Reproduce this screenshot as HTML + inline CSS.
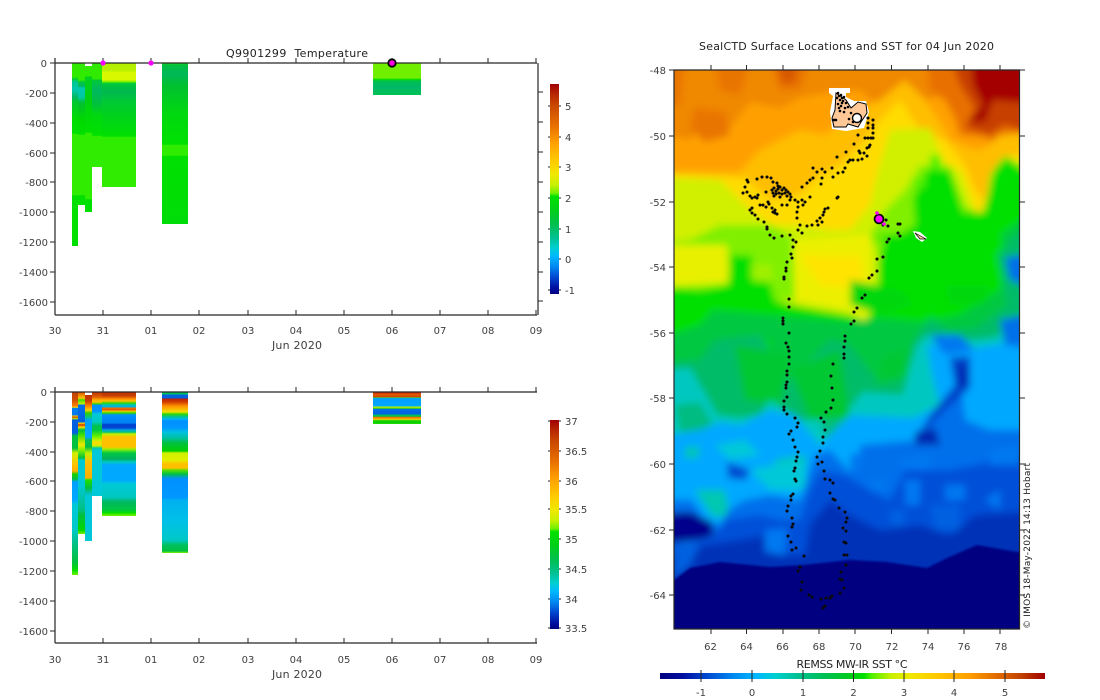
<!DOCTYPE html>
<html>
<head>
<meta charset="utf-8">
<style>
html,body{margin:0;padding:0;background:#fff;width:1100px;height:700px;overflow:hidden}
svg{display:block}
text{font-family:"DejaVu Sans","Liberation Sans",sans-serif;font-size:10px;fill:#404040}
.ti{font-size:11px;fill:#222}
.s{stroke:#262626;stroke-width:1.2;fill:none}
.t{stroke:#262626;stroke-width:1;fill:none}
</style>
</head>
<body>
<svg width="1100" height="700" viewBox="0 0 1100 700" xmlns="http://www.w3.org/2000/svg">
<defs>
<clipPath id="mc"><rect x="674" y="70" width="345" height="559"/></clipPath>
<filter id="bl" filterUnits="userSpaceOnUse" x="640" y="40" width="410" height="640"><feGaussianBlur stdDeviation="3.6"/></filter>
<filter id="bl1" filterUnits="userSpaceOnUse" x="640" y="40" width="410" height="640"><feGaussianBlur stdDeviation="1"/></filter>

<linearGradient id="cb1" x1="0" y1="0" x2="0" y2="1">
<stop offset="0" stop-color="#a00000"/><stop offset=".05" stop-color="#b82800"/><stop offset=".1" stop-color="#c84800"/><stop offset=".2" stop-color="#e87000"/><stop offset=".28" stop-color="#ffa000"/><stop offset=".36" stop-color="#ffc800"/><stop offset=".43" stop-color="#f0e800"/><stop offset=".48" stop-color="#c8f000"/><stop offset=".52" stop-color="#70f000"/><stop offset=".535" stop-color="#00e000"/><stop offset=".6" stop-color="#00d018"/><stop offset=".66" stop-color="#00c048"/><stop offset=".73" stop-color="#00c090"/><stop offset=".78" stop-color="#00cfd0"/><stop offset=".82" stop-color="#00b8ff"/><stop offset=".87" stop-color="#0088f0"/><stop offset=".92" stop-color="#0048d0"/><stop offset=".97" stop-color="#0010a0"/><stop offset="1" stop-color="#000080"/>
</linearGradient>
<linearGradient id="cbh" x1="0" y1="0" x2="1" y2="0">
<stop offset="0" stop-color="#000080"/><stop offset=".06" stop-color="#0010a0"/><stop offset=".12" stop-color="#0048d0"/><stop offset=".19" stop-color="#0088f0"/><stop offset=".25" stop-color="#00b8ff"/><stop offset=".3" stop-color="#00cfd0"/><stop offset=".36" stop-color="#00c090"/><stop offset=".44" stop-color="#00c048"/><stop offset=".5" stop-color="#00d018"/><stop offset=".53" stop-color="#00e000"/><stop offset=".55" stop-color="#50f000"/><stop offset=".6" stop-color="#c8f000"/><stop offset=".65" stop-color="#f0e800"/><stop offset=".72" stop-color="#ffc800"/><stop offset=".8" stop-color="#ffa000"/><stop offset=".88" stop-color="#e06800"/><stop offset=".94" stop-color="#c04000"/><stop offset="1" stop-color="#a00000"/>
</linearGradient>

<!-- offsets are y/1000 in user space -->
<linearGradient id="t1" gradientUnits="userSpaceOnUse" x1="0" y1="0" x2="0" y2="1000"><stop offset=".063" stop-color="#30ea00"/><stop offset=".077" stop-color="#30ea00"/><stop offset=".079" stop-color="#00d030"/><stop offset=".082" stop-color="#00c890"/><stop offset=".09" stop-color="#00c8b0"/><stop offset=".097" stop-color="#00b860"/><stop offset=".102" stop-color="#00c830"/><stop offset=".12" stop-color="#00dc00"/><stop offset=".1335" stop-color="#00e000"/><stop offset=".134" stop-color="#30ec00"/><stop offset=".195" stop-color="#30ec00"/><stop offset=".1955" stop-color="#00e000"/><stop offset=".246" stop-color="#00e000"/></linearGradient>
<linearGradient id="t2" gradientUnits="userSpaceOnUse" x1="0" y1="0" x2="0" y2="1000"><stop offset=".063" stop-color="#30ea00"/><stop offset=".08" stop-color="#30ea00"/><stop offset=".082" stop-color="#00c840"/><stop offset=".086" stop-color="#00b860"/><stop offset=".088" stop-color="#00c8b0"/><stop offset=".097" stop-color="#00c8a0"/><stop offset=".103" stop-color="#00c030"/><stop offset=".12" stop-color="#00d800"/><stop offset=".1345" stop-color="#00e000"/><stop offset=".135" stop-color="#30ec00"/><stop offset=".195" stop-color="#30ec00"/><stop offset=".1955" stop-color="#00e000"/><stop offset=".205" stop-color="#00e000"/></linearGradient>
<linearGradient id="t3" gradientUnits="userSpaceOnUse" x1="0" y1="0" x2="0" y2="1000"><stop offset=".066" stop-color="#30ea00"/><stop offset=".076" stop-color="#30ea00"/><stop offset=".077" stop-color="#00d020"/><stop offset=".1" stop-color="#00d010"/><stop offset=".1325" stop-color="#00e000"/><stop offset=".133" stop-color="#30ec00"/><stop offset=".199" stop-color="#30ec00"/><stop offset=".1995" stop-color="#00e000"/><stop offset=".212" stop-color="#00e000"/></linearGradient>
<linearGradient id="t4" gradientUnits="userSpaceOnUse" x1="0" y1="0" x2="0" y2="1000"><stop offset=".063" stop-color="#30ea00"/><stop offset=".079" stop-color="#30ea00"/><stop offset=".08" stop-color="#00c838"/><stop offset=".09" stop-color="#00b860"/><stop offset=".103" stop-color="#00c040"/><stop offset=".115" stop-color="#00d810"/><stop offset=".1355" stop-color="#00e000"/><stop offset=".136" stop-color="#30ec00"/><stop offset=".167" stop-color="#30ec00"/></linearGradient>
<linearGradient id="t5" gradientUnits="userSpaceOnUse" x1="0" y1="0" x2="0" y2="1000"><stop offset=".063" stop-color="#b0f000"/><stop offset=".071" stop-color="#b8f000"/><stop offset=".072" stop-color="#d8f800"/><stop offset=".08" stop-color="#d8f800"/><stop offset=".082" stop-color="#60f000"/><stop offset=".0835" stop-color="#00c838"/><stop offset=".092" stop-color="#00b850"/><stop offset=".1" stop-color="#00c838"/><stop offset=".113" stop-color="#00d020"/><stop offset=".1365" stop-color="#00e000"/><stop offset=".137" stop-color="#30ec00"/><stop offset=".187" stop-color="#30ec00"/></linearGradient>
<linearGradient id="t6" gradientUnits="userSpaceOnUse" x1="0" y1="0" x2="0" y2="1000"><stop offset=".063" stop-color="#20e800"/><stop offset=".065" stop-color="#00c040"/><stop offset=".074" stop-color="#00b858"/><stop offset=".085" stop-color="#00c030"/><stop offset=".113" stop-color="#00d810"/><stop offset=".1445" stop-color="#00e000"/><stop offset=".145" stop-color="#30ec00"/><stop offset=".1555" stop-color="#30ec00"/><stop offset=".156" stop-color="#00e000"/><stop offset=".224" stop-color="#00dc08"/></linearGradient>
<linearGradient id="t7" gradientUnits="userSpaceOnUse" x1="0" y1="0" x2="0" y2="1000"><stop offset=".063" stop-color="#70f000"/><stop offset=".078" stop-color="#70f000"/><stop offset=".0795" stop-color="#00e000"/><stop offset=".081" stop-color="#00c050"/><stop offset=".087" stop-color="#00b868"/><stop offset=".095" stop-color="#00c050"/></linearGradient>

<linearGradient id="s1" gradientUnits="userSpaceOnUse" x1="0" y1="0" x2="0" y2="1000"><stop offset=".392" stop-color="#c04000"/><stop offset=".4" stop-color="#d05000"/><stop offset=".406" stop-color="#ff8000"/><stop offset=".4075" stop-color="#ffe000"/><stop offset=".408" stop-color="#0080f0"/><stop offset=".415" stop-color="#0078f0"/><stop offset=".416" stop-color="#ffe000"/><stop offset=".417" stop-color="#d03000"/><stop offset=".4185" stop-color="#c0f000"/><stop offset=".42" stop-color="#0060e0"/><stop offset=".433" stop-color="#0060e0"/><stop offset=".436" stop-color="#00c040"/><stop offset=".448" stop-color="#00c040"/><stop offset=".453" stop-color="#d0f000"/><stop offset=".465" stop-color="#ffc000"/><stop offset=".471" stop-color="#ffb000"/><stop offset=".474" stop-color="#20d000"/><stop offset=".479" stop-color="#00c040"/><stop offset=".482" stop-color="#00a0ff"/><stop offset=".5" stop-color="#00a8ff"/><stop offset=".505" stop-color="#00c8d8"/><stop offset=".53" stop-color="#00c8c8"/><stop offset=".545" stop-color="#00c080"/><stop offset=".562" stop-color="#00c040"/><stop offset=".57" stop-color="#00e000"/><stop offset=".575" stop-color="#70f000"/></linearGradient>
<linearGradient id="s2" gradientUnits="userSpaceOnUse" x1="0" y1="0" x2="0" y2="1000"><stop offset=".392" stop-color="#d85000"/><stop offset=".398" stop-color="#ffc000"/><stop offset=".4" stop-color="#40e000"/><stop offset=".404" stop-color="#c8f000"/><stop offset=".405" stop-color="#0070e8"/><stop offset=".422" stop-color="#0060e0"/><stop offset=".423" stop-color="#f8e000"/><stop offset=".425" stop-color="#d03000"/><stop offset=".427" stop-color="#ffe000"/><stop offset=".43" stop-color="#00c040"/><stop offset=".435" stop-color="#40e000"/><stop offset=".445" stop-color="#f0e800"/><stop offset=".45" stop-color="#80f000"/><stop offset=".458" stop-color="#00c040"/><stop offset=".46" stop-color="#00c8d0"/><stop offset=".485" stop-color="#00c8d8"/><stop offset=".51" stop-color="#00c080"/><stop offset=".515" stop-color="#00c040"/><stop offset=".53" stop-color="#00d800"/><stop offset=".534" stop-color="#70f000"/></linearGradient>
<linearGradient id="s3" gradientUnits="userSpaceOnUse" x1="0" y1="0" x2="0" y2="1000"><stop offset=".395" stop-color="#c03000"/><stop offset=".401" stop-color="#c84000"/><stop offset=".406" stop-color="#ff8000"/><stop offset=".41" stop-color="#ffd000"/><stop offset=".413" stop-color="#30d000"/><stop offset=".418" stop-color="#00c0a0"/><stop offset=".42" stop-color="#00a0ff"/><stop offset=".437" stop-color="#00a8ff"/><stop offset=".44" stop-color="#00c060"/><stop offset=".447" stop-color="#00c040"/><stop offset=".453" stop-color="#c0f000"/><stop offset=".462" stop-color="#ffc000"/><stop offset=".478" stop-color="#ffb000"/><stop offset=".48" stop-color="#20e000"/><stop offset=".488" stop-color="#00c040"/><stop offset=".492" stop-color="#00c0a0"/><stop offset=".496" stop-color="#00c8d8"/><stop offset=".541" stop-color="#00c8d8"/></linearGradient>
<linearGradient id="s4" gradientUnits="userSpaceOnUse" x1="0" y1="0" x2="0" y2="1000"><stop offset=".392" stop-color="#c03000"/><stop offset=".397" stop-color="#e06000"/><stop offset=".4" stop-color="#ffb000"/><stop offset=".402" stop-color="#ffc000"/><stop offset=".404" stop-color="#30d800"/><stop offset=".405" stop-color="#0090ff"/><stop offset=".411" stop-color="#0090ff"/><stop offset=".414" stop-color="#00c8d8"/><stop offset=".422" stop-color="#00c8c0"/><stop offset=".426" stop-color="#00c050"/><stop offset=".43" stop-color="#00c840"/><stop offset=".436" stop-color="#60f000"/><stop offset=".44" stop-color="#c0f000"/><stop offset=".443" stop-color="#ffd800"/><stop offset=".446" stop-color="#c0f000"/><stop offset=".448" stop-color="#00c8a0"/><stop offset=".45" stop-color="#00c8d8"/><stop offset=".496" stop-color="#00c8d8"/></linearGradient>
<linearGradient id="s5" gradientUnits="userSpaceOnUse" x1="0" y1="0" x2="0" y2="1000"><stop offset=".392" stop-color="#c03000"/><stop offset=".396" stop-color="#c84000"/><stop offset=".399" stop-color="#ff9000"/><stop offset=".401" stop-color="#ffc000"/><stop offset=".403" stop-color="#30d800"/><stop offset=".405" stop-color="#00c0c0"/><stop offset=".407" stop-color="#00b0e0"/><stop offset=".408" stop-color="#f07000"/><stop offset=".41" stop-color="#e05000"/><stop offset=".411" stop-color="#ffd000"/><stop offset=".413" stop-color="#30d800"/><stop offset=".415" stop-color="#0090ff"/><stop offset=".423" stop-color="#0080f0"/><stop offset=".4245" stop-color="#0040d0"/><stop offset=".428" stop-color="#0048d0"/><stop offset=".43" stop-color="#00a8e0"/><stop offset=".432" stop-color="#00c080"/><stop offset=".434" stop-color="#c0f000"/><stop offset=".437" stop-color="#ffc000"/><stop offset=".447" stop-color="#ffc000"/><stop offset=".449" stop-color="#a0f000"/><stop offset=".453" stop-color="#00c840"/><stop offset=".459" stop-color="#00b060"/><stop offset=".462" stop-color="#00c8c0"/><stop offset=".465" stop-color="#00a8ff"/><stop offset=".48" stop-color="#00a8ff"/><stop offset=".484" stop-color="#00c8d8"/><stop offset=".497" stop-color="#00c8c0"/><stop offset=".502" stop-color="#00b860"/><stop offset=".51" stop-color="#00c840"/><stop offset=".5125" stop-color="#00e000"/><stop offset=".516" stop-color="#80f000"/></linearGradient>
<linearGradient id="s6" gradientUnits="userSpaceOnUse" x1="0" y1="0" x2="0" y2="1000"><stop offset=".392" stop-color="#00c060"/><stop offset=".394" stop-color="#00c060"/><stop offset=".395" stop-color="#0060e0"/><stop offset=".398" stop-color="#0060e0"/><stop offset=".399" stop-color="#c02000"/><stop offset=".402" stop-color="#d04000"/><stop offset=".406" stop-color="#ff9000"/><stop offset=".412" stop-color="#f0e000"/><stop offset=".414" stop-color="#30d800"/><stop offset=".417" stop-color="#00c0a0"/><stop offset=".419" stop-color="#00b8f0"/><stop offset=".421" stop-color="#0090ff"/><stop offset=".428" stop-color="#0098ff"/><stop offset=".432" stop-color="#00c0e0"/><stop offset=".438" stop-color="#00c0a0"/><stop offset=".443" stop-color="#00c040"/><stop offset=".451" stop-color="#00d000"/><stop offset=".453" stop-color="#d0f000"/><stop offset=".46" stop-color="#e0f000"/><stop offset=".464" stop-color="#ffc000"/><stop offset=".468" stop-color="#ffc000"/><stop offset=".47" stop-color="#60e000"/><stop offset=".474" stop-color="#00c040"/><stop offset=".477" stop-color="#00a0c0"/><stop offset=".479" stop-color="#0090ff"/><stop offset=".498" stop-color="#0098ff"/><stop offset=".5" stop-color="#00b0f0"/><stop offset=".52" stop-color="#00c0e8"/><stop offset=".54" stop-color="#00c8c8"/><stop offset=".545" stop-color="#00c060"/><stop offset=".551" stop-color="#00c040"/><stop offset=".553" stop-color="#80f000"/></linearGradient>
<linearGradient id="s7" gradientUnits="userSpaceOnUse" x1="0" y1="0" x2="0" y2="1000"><stop offset=".392" stop-color="#c82000"/><stop offset=".3935" stop-color="#d84000"/><stop offset=".395" stop-color="#e06000"/><stop offset=".397" stop-color="#d03800"/><stop offset=".3975" stop-color="#60e000"/><stop offset=".398" stop-color="#00b0d0"/><stop offset=".399" stop-color="#00a0ff"/><stop offset=".406" stop-color="#00a8ff"/><stop offset=".407" stop-color="#d0f000"/><stop offset=".4085" stop-color="#30e000"/><stop offset=".409" stop-color="#0070e8"/><stop offset=".414" stop-color="#0060e0"/><stop offset=".415" stop-color="#00c060"/><stop offset=".4165" stop-color="#00c040"/><stop offset=".417" stop-color="#f07000"/><stop offset=".4185" stop-color="#ff9000"/><stop offset=".4195" stop-color="#f0e000"/><stop offset=".4205" stop-color="#20d000"/><stop offset=".4235" stop-color="#00d000"/><stop offset=".424" stop-color="#70f000"/></linearGradient>
</defs>

<rect width="1100" height="700" fill="#fff"/>

<!-- TOP PLOT -->
<rect x="72" y="63" width="6" height="183" fill="url(#t1)"/>
<rect x="78" y="63" width="7" height="142" fill="url(#t2)"/>
<rect x="85" y="66" width="7" height="146" fill="url(#t3)"/>
<rect x="92" y="63" width="10" height="104" fill="url(#t4)"/>
<rect x="102" y="63" width="34" height="124" fill="url(#t5)"/>
<rect x="162" y="63" width="26" height="161" fill="url(#t6)"/>
<rect x="373" y="63" width="48" height="32" fill="url(#t7)"/>

<path class="s" d="M55 63H537M55 58V315M55 315H537M538 63V315"/>
<path class="t" d="M103 58V63M151 58V63M199 58V63M248 58V63M296 58V63M344 58V63M392 58V63M440 58V63M488 58V63M536 58V63M50 63H55M50 93H55M50 123H55M50 153H55M50 182H55M50 212H55M50 242H55M50 272H55M50 302H55M103 310V315M151 310V315M199 310V315M248 310V315M296 310V315M344 310V315M392 310V315M440 310V315M488 310V315M536 310V315M538 92H543M538 122H543M538 152H543M538 182H543M538 212H543M538 242H543M538 272H543M538 301H543"/>
<g text-anchor="end">
<text x="47" y="67">0</text><text x="48" y="97">-200</text><text x="48" y="127">-400</text><text x="48" y="157">-600</text><text x="48" y="186">-800</text><text x="48" y="216">-1000</text><text x="48" y="246">-1200</text><text x="48" y="276">-1400</text><text x="48" y="306">-1600</text>
</g>
<g text-anchor="middle">
<text x="55" y="334">30</text><text x="103" y="334">31</text><text x="151" y="334">01</text><text x="199" y="334">02</text><text x="248" y="334">03</text><text x="296" y="334">04</text><text x="344" y="334">05</text><text x="392" y="334">06</text><text x="440" y="334">07</text><text x="488" y="334">08</text><text x="536" y="334">09</text>
<text x="297" y="349" class="ti" style="fill:#404040" textLength="50">Jun 2020</text>
<text x="297" y="57" class="ti" textLength="142" xml:space="preserve">Q9901299  Temperature</text>
</g>
<circle cx="103" cy="63" r="2.6" fill="#ff00ff"/><circle cx="151" cy="63" r="2.6" fill="#ff00ff"/>
<circle cx="392" cy="63" r="4.6" fill="#000"/><circle cx="392" cy="63" r="2.8" fill="#ff00e0"/>

<!-- top colorbar -->
<rect x="550" y="84" width="9" height="210" fill="url(#cb1)"/>
<path class="t" d="M548 106H550M559 106H561M548 137H550M559 137H561M548 167H550M559 167H561M548 198H550M559 198H561M548 229H550M559 229H561M548 259H550M559 259H561M548 290H550M559 290H561"/>
<text x="565" y="110">5</text><text x="565" y="141">4</text><text x="565" y="171">3</text><text x="565" y="202">2</text><text x="565" y="233">1</text><text x="565" y="263">0</text><text x="565" y="294">-1</text>

<!-- BOTTOM PLOT -->
<rect x="72" y="392" width="6" height="183" fill="url(#s1)"/>
<rect x="78" y="392" width="7" height="142" fill="url(#s2)"/>
<rect x="85" y="395" width="7" height="146" fill="url(#s3)"/>
<rect x="92" y="392" width="10" height="104" fill="url(#s4)"/>
<rect x="102" y="392" width="34" height="124" fill="url(#s5)"/>
<rect x="162" y="392" width="26" height="161" fill="url(#s6)"/>
<rect x="373" y="392" width="48" height="32" fill="url(#s7)"/>

<path class="s" d="M55 392H537M55 387V643M55 643H537"/>
<path class="t" d="M103 387V392M151 387V392M199 387V392M248 387V392M296 387V392M344 387V392M392 387V392M440 387V392M488 387V392M536 387V392M50 392H55M50 422H55M50 452H55M50 481H55M50 511H55M50 541H55M50 571H55M50 601H55M50 631H55M103 638V643M151 638V643M199 638V643M248 638V643M296 638V643M344 638V643M392 638V643M440 638V643M488 638V643M536 638V643"/>
<g text-anchor="end">
<text x="47" y="396">0</text><text x="48" y="426">-200</text><text x="48" y="456">-400</text><text x="48" y="485">-600</text><text x="48" y="515">-800</text><text x="48" y="545">-1000</text><text x="48" y="575">-1200</text><text x="48" y="605">-1400</text><text x="48" y="635">-1600</text>
</g>
<g text-anchor="middle">
<text x="55" y="663">30</text><text x="103" y="663">31</text><text x="151" y="663">01</text><text x="199" y="663">02</text><text x="248" y="663">03</text><text x="296" y="663">04</text><text x="344" y="663">05</text><text x="392" y="663">06</text><text x="440" y="663">07</text><text x="488" y="663">08</text><text x="536" y="663">09</text>
<text x="297" y="678" class="ti" style="fill:#404040" textLength="50">Jun 2020</text>
</g>
<rect x="550" y="420" width="9" height="209" fill="url(#cb1)"/>
<path class="t" d="M548 421H550M559 421H561M548 451H550M559 451H561M548 481H550M559 481H561M548 509H550M559 509H561M548 539H550M559 539H561M548 569H550M559 569H561M548 599H550M559 599H561M548 628H550M559 628H561"/>
<text x="565" y="425">37</text><text x="565" y="455">36.5</text><text x="565" y="485">36</text><text x="565" y="513">35.5</text><text x="565" y="543">35</text><text x="565" y="573">34.5</text><text x="565" y="603">34</text><text x="565" y="632">33.5</text>

<!-- MAP -->
<g clip-path="url(#mc)">
<g filter="url(#bl)">
<rect x="640" y="40" width="410" height="640" fill="#ffa000"/>
<path fill="#f08800" d="M640 40H960L945 90L930 100L905 92L880 108L860 90L830 92L800 98L780 108L750 102L730 128L700 128L690 140L640 130Z"/>
<path fill="#e87400" d="M695 108L725 112L730 135L705 142L690 128ZM770 60L810 60L800 90L780 90ZM715 60L750 60L740 95L720 90ZM640 60H685L680 105L640 110Z"/>
<path fill="#d85800" d="M776 60L798 60L795 82L782 84Z"/>
<path fill="#e87000" d="M925 40H1050V152L1000 150L985 137L960 135L955 118L945 100L930 90Z"/>
<path fill="#c84000" d="M945 40H1050V140L1005 125L990 135L965 128L975 108L960 85Z"/>
<path fill="#a50000" d="M968 40H1050V105L993 100L985 122L968 122L983 105L973 85Z"/>
<path fill="#ffbe00" d="M640 172L740 172L760 150L780 140L800 130L825 135L850 115L880 100L905 80L925 100L945 130L950 140L975 150L985 148L1000 135L1050 130V700H640Z"/>
<path fill="#ffdc00" d="M640 172L745 178L770 200L800 195L820 175L840 165L865 140L880 120L900 100L920 130L945 140L965 165L975 190L985 200L1000 185L1010 155L1050 150V700H640Z"/>
<path fill="#d0f000" d="M640 176L720 180L745 205L770 225L800 225L830 230L850 230L870 205L878 170L890 130L930 128L945 165L960 170L975 210L985 232L990 195L1000 165L1050 155V700H640Z"/>
<path fill="#80f000" d="M640 245L690 240L720 225L770 225L795 238L800 300H640ZM870 235L885 210L905 190L920 165L950 165L965 205L985 218L990 175L1005 155L1050 185V340H880L880 260Z"/>
<path fill="#e8f000" d="M640 245L727 245L730 283L640 288Z"/>
<path fill="#ecf000" d="M793 240L870 235L872 318L845 308L795 300Z"/>
<path fill="#ffe400" d="M800 255L860 255L865 290L820 285Z"/>
<path fill="#a0f000" d="M752 265L772 265L772 282L752 282Z"/>
<path fill="#00e000" d="M640 285L700 290L728 285L730 255L752 255L752 280L770 282L775 300L793 305L850 315L865 322L878 300L878 262L885 240L872 236L900 234L915 225L913 198L927 170L950 170L963 212L983 212L995 167L1007 157L1050 192V700H640Z"/>
<path fill="#50f000" d="M915 178L925 178L925 188L915 186ZM930 155L940 155L942 170L930 170Z"/>
<path fill="#00c840" d="M640 345L700 325L713 310L850 322L880 318L925 322L960 315L1000 290L1010 260L1000 235L1050 200V700H640Z"/>
<path fill="#00d810" d="M850 280L900 290L915 305L880 315L850 305ZM945 285L990 285L985 305L950 305ZM750 340L772 340L770 370L752 368Z"/>
<path fill="#00bc68" d="M640 365L700 360L715 340L760 335L790 380L830 340L850 345L880 385L907 378L913 342L930 317L950 332L977 328L1007 305L997 255L1010 240L1050 210V700H640Z"/>
<path fill="#00c830" d="M735 345L790 355L780 405L745 400ZM790 370L840 350L850 420L810 420ZM880 360L905 350L900 375L880 380Z"/>
<path fill="#00c8c0" d="M640 372L690 368L710 402L717 415L740 418L760 415L770 400L800 420L820 420L830 445L845 440L850 408L863 392L903 395L910 368L917 345L927 335L950 342L993 338L1050 310V700H640Z"/>
<path fill="#00bc80" d="M674 405L700 402L716 430L680 432ZM820 420L845 418L842 445L828 445Z"/>
<path fill="#00a8ff" d="M640 440L700 430L720 422L740 425L770 410L795 415L820 445L850 415L913 418L940 405L932 375L927 345L950 345L960 350L993 345L1050 330V700H640Z"/>
<path fill="#00c8b0" d="M685 447L700 447L698 458L685 458ZM775 460L805 455L805 482L780 482ZM695 490L725 490L730 518L712 516Z"/>
<path fill="#00c8d8" d="M715 445L745 440L760 455L730 460ZM750 470L800 460L810 490L770 490Z"/>
<path fill="#0070e8" d="M1005 258L1050 250V295L1010 280ZM1000 320L1050 310V350L1005 345Z"/>
<path fill="#0070ea" d="M640 500L692 500L705 520L720 525L728 510L745 500L770 495L800 500L808 475L815 455L830 450L850 472L860 465L860 445L920 440L935 415L962 390L965 420L990 430L1050 430V700H640Z"/>
<path fill="#0078f0" d="M930 335L960 335L975 350L945 355ZM900 460L930 455L930 470L905 470Z"/>
<path fill="#0040c8" d="M950 358L970 356L970 388L945 410L925 430L915 440L930 415L955 385Z"/>
<path fill="#0028b0" d="M915 432L935 428L940 445L915 445ZM960 363L967 368L968 385L958 385Z"/>
<path fill="#0050d8" d="M640 540L690 545L715 535L725 520L760 515L780 520L800 520L810 490L820 470L845 475L870 490L890 500L905 470L930 470L950 470L1000 460L1050 450V700H640Z"/>
<path fill="#0048d0" d="M727 462L750 470L745 480L728 478Z"/>
<path fill="#0078f0" d="M945 485L965 485L965 500L945 500ZM850 455L862 452L860 470L850 472ZM905 480L920 480L920 505L905 505ZM870 480L885 480L885 490L870 490ZM985 500L1000 490L1000 510ZM990 450L1020 445V465L990 465Z"/>
<path fill="#0030b8" d="M640 578L680 550L705 545L740 540L770 535L775 555L805 555L810 525L830 500L850 515L880 530L920 525L950 535L975 515L1050 510V700H640Z"/>
<path fill="#0078f0" d="M765 530L787 528L785 555L765 552Z"/>
<path fill="#0060e0" d="M674 545L700 545L690 565L674 578ZM930 505L960 505L960 530L935 530ZM890 510L905 510L905 525L890 525Z"/>
<path fill="#00008c" d="M640 515L690 512L712 522L714 535L700 540L640 545Z"/>
</g>
<path filter="url(#bl1)" fill="#000080" d="M640 590L674 580L690 568L720 562L770 567L803 565L850 560L887 562L927 568L947 558L977 545L1017 552L1050 552V700H640Z"/>
</g>

<!-- Kerguelen -->
<path fill="#fff" d="M829 88H850V93H846V97L854 101L866 101L869 112L864 128L846 131L832 129L830 112L833 96L829 93Z"/>
<path fill="#ffc896" stroke="#000" stroke-width="1" d="M836 93L846 100L851 108L858 102L866 104L867 113L861 122L858 127L848 124L846 127L834 127L832 118L835 110Z"/>
<circle cx="857" cy="118" r="4.5" fill="#fff" stroke="#000" stroke-width="1.4"/>
<path stroke="#000" stroke-width="2.6" stroke-linecap="round" fill="none" d="M838 93h.01M841 95h.01M844 97h.01M837 98h.01M840 100h.01M843 101h.01M846 103h.01M838 104h.01M841 106h.01M845 108h.01M848 107h.01M840 111h.01M844 112h.01M836 120h-3M851 113h.01M853 122h.01M849 119h.01M839 96h.01M842 98h.01M842 103h.01M839 108h.01"/>
<!-- Heard -->
<path fill="#fff" d="M913 231L920 232L927 238L922 242L916 238Z"/>
<path fill="#ffc896" stroke="#000" stroke-width=".7" d="M915 233L926 239L920 239Z"/>

<!-- tracks -->
<g clip-path="url(#mc)">
<path fill="none" stroke="#0a0a0a" stroke-width="3.1" stroke-linecap="round" d="M747 180h.01M748 182h.01M745 187h.01M743 193h.01M757 179h.01M762 177h.01M767 177h.01M771 178h.01M773 182h.01M777 183h.01M778 186h.01M772 190h.01M774 188h.01M776 191h.01M778 189h.01M780 187h.01M782 190h.01M784 188h.01M786 190h.01M788 192h.01M773 193h.01M776 194h.01M779 193h.01M782 194h.01M785 193h.01M787 196h.01M790 194h.01M791 197h.01M774 196h.01M780 197h.01M747 192h.01M750 196h.01M752 198h.01M758 195h.01M755 197h.01M757 198h.01M766 192h.01M782 205h.01M787 205h.01M760 205h.01M752 208h.01M750 210h.01M768 202h.01M763 205h.01M766 207h.01M772 208h.01M769 204h.01M773 212h.01M775 210h.01M777 214h.01M775 213h.01M752 213h.01M755 215h.01M758 219h.01M764 222h.01M767 227h.01M767 229h.01M770 235h.01M774 238h.01M782 236h.01M790 235h.01M793 240h.01M796 242h.01M802 233h.01M798 230h.01M800 225h.01M807 226h.01M812 225h.01M817 221h.01M818 225h.01M822 222h.01M820 218h.01M823 215h.01M825 209h.01M828 208h.01M824 212h.01M797 212h.01M797 218h.01M798 207h.01M798 202h.01M790 200h.01M795 200h.01M802 200h.01M805 202h.01M810 197h.01M803 205h.01M802 187h.01M807 183h.01M810 180h.01M813 178h.01M813 168h.01M817 172h.01M822 169h.01M825 172h.01M822 178h.01M821 184h.01M832 168h.01M833 177h.01M838 173h.01M843 172h.01M845 168h.01M848 162h.01M837 157h.01M846 152h.01M838 197h.01M837 198h.01M873 120h.01M868 118h.01M868 123h.01M873 125h.01M868 128h.01M873 128h.01M858 135h.01M873 133h.01M865 138h.01M868 138h.01M871 138h.01M873 138h.01M870 145h.01M867 148h.01M869 147h.01M854 144h.01M859 151h.01M860 153h.01M864 153h.01M867 156h.01M850 160h.01M853 160h.01M858 160h.01M862 159h.01M886 220h.01M883 225h.01M888 226h.01M898 224h.01M900 224h.01M898 233h.01M900 236h.01M889 239h.01M887 242h.01M793 247h.01M791 254h.01M792 258h.01M787 262h.01M786 268h.01M786 271h.01M784 277h.01M784 279h.01M789 299h.01M789 307h.01M783 318h.01M783 321h.01M783 324h.01M789 333h.01M786 343h.01M788 347h.01M789 351h.01M789 357h.01M789 364h.01M787 371h.01M787 375h.01M787 382h.01M786 385h.01M786 388h.01M787 397h.01M784 401h.01M784 407h.01M784 410h.01M787 414h.01M795 418h.01M798 423h.01M797 427h.01M791 431h.01M789 434h.01M793 440h.01M845 336h.01M845 341h.01M844 347h.01M844 354h.01M844 358h.01M833 364h.01M831 376h.01M832 388h.01M833 400h.01M831 408h.01M826 412h.01M821 418h.01M824 422h.01M825 430h.01M823 437h.01M823 443h.01M883 257h.01M877 259h.01M877 271h.01M872 275h.01M869 278h.01M865 295h.01M862 298h.01M857 308h.01M854 312h.01M854 321h.01M851 324h.01M795 447h.01M798 452h.01M797 457h.01M796 461h.01M795 468h.01M794 471h.01M795 479h.01M796 481h.01M793 494h.01M791 496h.01M791 500h.01M788 506h.01M787 511h.01M792 518h.01M793 524h.01M792 527h.01M788 536h.01M791 542h.01M796 548h.01M792 550h.01M804 556h.01M800 567h.01M798 571h.01M802 582h.01M801 590h.01M809 595h.01M812 597h.01M821 599h.01M826 598h.01M830 598h.01M832 596h.01M840 593h.01M844 588h.01M842 580h.01M840 579h.01M841 572h.01M846 565h.01M844 555h.01M847 555h.01M844 542h.01M846 543h.01M846 531h.01M843 528h.01M846 522h.01M847 518h.01M845 512h.01M839 508h.01M835 500h.01M833 499h.01M830 493h.01M833 483h.01M830 480h.01M825 479h.01M824 471h.01M822 462h.01M818 464h.01M817 457h.01M820 451h.01M823 608h.01M825 606h.01"/>
<circle cx="879" cy="219" r="5.3" fill="#000"/><circle cx="879" cy="219" r="3.6" fill="#f0f"/>
<circle cx="877" cy="213" r="1.8" fill="#f0f"/><circle cx="884" cy="224" r="1.8" fill="#f0f"/>
</g>

<!-- map frame -->
<path class="s" d="M674 70V629H1019.5V70H674"/>
<path class="t" d="M711 65V70M746.5 65V70M783 65V70M819 65V70M855 65V70M891.5 65V70M928 65V70M964 65V70M1000 65V70M711 629V634M746.5 629V634M783 629V634M819 629V634M855 629V634M891.5 629V634M928 629V634M964 629V634M1000 629V634M669 136H674M669 202H674M669 267H674M669 333H674M669 398H674M669 464H674M669 530H674M669 595H674M1020 136H1025M1020 202H1025M1020 267H1025M1020 333H1025M1020 398H1025M1020 464H1025M1020 530H1025M1020 595H1025M669 70H674M1020 70H1025"/>
<g text-anchor="end">
<text x="666" y="74">-48</text><text x="666" y="140">-50</text><text x="666" y="206">-52</text><text x="666" y="271">-54</text><text x="666" y="337">-56</text><text x="666" y="402">-58</text><text x="666" y="468">-60</text><text x="666" y="534">-62</text><text x="666" y="599">-64</text>
</g>
<g text-anchor="middle">
<text x="710.5" y="650">62</text><text x="746.5" y="650">64</text><text x="782.5" y="650">66</text><text x="819" y="650">68</text><text x="855.5" y="650">70</text><text x="892" y="650">72</text><text x="928" y="650">74</text><text x="964" y="650">76</text><text x="1001" y="650">78</text>
<text x="846.5" y="50" class="ti" textLength="295">SealCTD Surface Locations and SST for 04 Jun 2020</text>
<text x="852" y="668" class="ti" textLength="111">REMSS MW-IR SST °C</text>
</g>
<text transform="translate(1030,629) rotate(-90)" style="font-size:9px;fill:#222" textLength="166">© IMOS 18-May-2022 14:13 Hobart</text>

<!-- bottom colorbar -->
<rect x="660" y="673" width="385" height="6" fill="url(#cbh)"/>
<path class="t" d="M701 670V682M752 670V682M803 670V682M853.5 670V682M904 670V682M954 670V682M1005 670V682"/>
<g text-anchor="middle">
<text x="701" y="696">-1</text><text x="752" y="696">0</text><text x="803" y="696">1</text><text x="853.5" y="696">2</text><text x="904" y="696">3</text><text x="954" y="696">4</text><text x="1005" y="696">5</text>
</g>
</svg>
</body>
</html>
